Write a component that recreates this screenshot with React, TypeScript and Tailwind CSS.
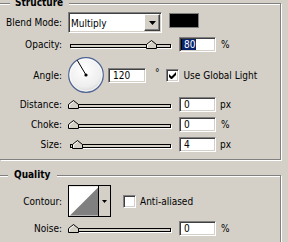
import React from 'react';

const sunken =
  'border border-t-[#808080] border-l-[#808080] border-b-white border-r-white shadow-[inset_1px_1px_0_#404040,inset_-1px_-1px_0_#d4d0c8]';

const Label = ({ children, className = '' }: { children: React.ReactNode; className?: string }) => (
  <div className={`w-[62px] shrink-0 text-right ${className}`}>{children}</div>
);

const Field = ({ value, selected = false, className = 'ml-[8px] w-[37px]' }: { value: string; selected?: boolean; className?: string }) => (
  <div className={`flex h-[15px] items-center bg-white leading-[11px] ${sunken} ${className} ${selected ? 'pl-[1px]' : 'pl-[4px]'}`}>
    {selected ? (
      <>
        <span className="h-[11px] w-px bg-black" />
        <span className="bg-[#0a246a] pl-[2px] pr-[1px] text-white">{value}</span>
      </>
    ) : (
      value
    )}
  </div>
);

const Slider = ({ pos }: { pos: number }) => (
  <div className="relative ml-[6px] h-[15px] w-[103px] shrink-0">
    <div className="absolute left-[2px] right-0 top-[7px] h-[4px] border border-black bg-[#d4d0c8] shadow-[1px_1px_0_#fff]" />
    <svg className="absolute top-[3px]" style={{ left: pos }} width="11" height="9" viewBox="0 0 11 9">
      <path d="M0.5 8.5V4.5L5.5 0.5L10.5 4.5V8.5Z" fill="#d4d0c8" stroke="#000" />
      <path d="M1.5 7.5V4.9L5.5 1.8" fill="none" stroke="#fff" />
    </svg>
  </div>
);

const Checkbox = ({ checked = false, className = '' }: { checked?: boolean; className?: string }) => (
  <div className={`flex h-[13px] w-[13px] shrink-0 items-center justify-center bg-white ${sunken} ${className}`}>
    {checked && (
      <svg width="7" height="7" viewBox="0 0 7 7">
        <path d="M0 2v3l2 2h1l4-4V0L2.5 4.5Z" fill="#000" />
      </svg>
    )}
  </div>
);

const Legend = ({ children, className }: { children: React.ReactNode; className: string }) => (
  <div className={`-mt-[7px] h-[12px] w-fit bg-[#d4d0c8] font-bold leading-[12px] ${className}`}>{children}</div>
);

const Dial = () => (
  <svg className="ml-[6px] shrink-0" width="36" height="36" viewBox="0 0 36 36">
    <defs>
      <radialGradient id="dialfill" cx="45%" cy="35%" r="70%">
        <stop offset="0%" stopColor="#ffffff" />
        <stop offset="70%" stopColor="#eeeeee" />
        <stop offset="100%" stopColor="#cfcfcf" />
      </radialGradient>
    </defs>
    <circle cx="18" cy="18" r="17.3" fill="url(#dialfill)" stroke="#4d6494" strokeWidth="1.2" />
    <circle cx="18" cy="18" r="16" fill="none" stroke="#ffffff" strokeOpacity="0.7" />
    <line x1="18" y1="18" x2="9.2" y2="3.2" stroke="#000" strokeWidth="1" />
    <circle cx="18" cy="18" r="1.6" fill="#000" />
  </svg>
);

export default function App() {
  return (
    <div className="h-[242px] w-[288px] overflow-hidden bg-[#d4d0c8] font-['DejaVu_Sans_Condensed','Liberation_Sans',sans-serif] text-[10px] text-black">
      {/* Structure */}
      <div className="mt-[3px] flex w-[281px] flex-col border-t border-r border-b border-[#808080] pb-[7px] shadow-[inset_0_1px_0_#fff,1px_1px_0_#fff]">
        <Legend className="ml-[10px] pl-[5px] pr-[6px]">Structure</Legend>

        <div className="mt-[3px] flex h-[21px]">
          <Label className="pt-[3px]">Blend Mode:</Label>
          <div className={`ml-[6px] flex h-[21px] w-[94px] bg-white ${sunken}`}>
            <div className="flex-1 pl-[2px] pt-[5px] leading-[12px]">Multiply</div>
            <div className="m-[1px] flex w-[16px] items-center justify-center border border-t-white border-l-white border-r-[#404040] border-b-[#404040] bg-[#d4d0c8] shadow-[inset_-1px_-1px_0_#808080]">
              <svg width="7" height="4" viewBox="0 0 7 4">
                <path d="M0 0h7L3.5 4Z" fill="#000" />
              </svg>
            </div>
          </div>
          <div className="ml-[7px] mt-[1px] h-[15px] w-[30px] border border-[#808080] bg-black" />
        </div>

        <div className="mt-[4px] flex h-[15px] items-center">
          <Label>Opacity:</Label>
          <Slider pos={78} />
          <Field value="80" selected />
          <span className="ml-[5px]">%</span>
        </div>

        <div className="mt-[5px] flex h-[36px] items-center">
          <Label>Angle:</Label>
          <Dial />
          <Field value="120" className="ml-[4px] w-[38px]" />
          <span className="ml-[9px] -mt-[6px]">°</span>
          <Checkbox checked className="ml-[6px]" />
          <span className="ml-[5px]">Use Global Light</span>
        </div>

        <div className="mt-[4px] flex h-[15px] items-center">
          <Label>Distance:</Label>
          <Slider pos={0} />
          <Field value="0" />
          <span className="ml-[4px]">px</span>
        </div>

        <div className="mt-[5px] flex h-[15px] items-center">
          <Label>Choke:</Label>
          <Slider pos={0} />
          <Field value="0" />
          <span className="ml-[5px]">%</span>
        </div>

        <div className="mt-[5px] flex h-[15px] items-center">
          <Label>Size:</Label>
          <Slider pos={4} />
          <Field value="4" />
          <span className="ml-[4px]">px</span>
        </div>
      </div>

      {/* Quality */}
      <div className="mt-[15px] flex w-[281px] flex-col border-t border-r border-b border-[#808080] pb-[20px] shadow-[inset_0_1px_0_#fff,1px_1px_0_#fff]">
        <Legend className="ml-[8px] pl-[6px] pr-[7px]">Quality</Legend>

        <div className="mt-[4px] flex h-[32px] items-center">
          <Label>Contour:</Label>
          <div className="ml-[6px] flex h-[32px] w-[43px] border border-black bg-[#d4d0c8]">
            <svg className="border-r border-black" width="30" height="30" viewBox="0 0 30 30">
              <rect x="0" y="0" width="30" height="30" fill="#fff" />
              <path d="M1 30L30 1V30Z" fill="#808080" />
            </svg>
            <div className="flex flex-1 items-center justify-center">
              <svg width="5" height="3" viewBox="0 0 5 3">
                <path d="M0 0h5L2.5 3Z" fill="#000" />
              </svg>
            </div>
          </div>
          <Checkbox className="ml-[12px]" />
          <span className="ml-[4px]">Anti-aliased</span>
        </div>

        <div className="mt-[4px] flex h-[15px] items-center">
          <Label>Noise:</Label>
          <Slider pos={0} />
          <Field value="0" />
          <span className="ml-[5px]">%</span>
        </div>
      </div>
    </div>
  );
}
